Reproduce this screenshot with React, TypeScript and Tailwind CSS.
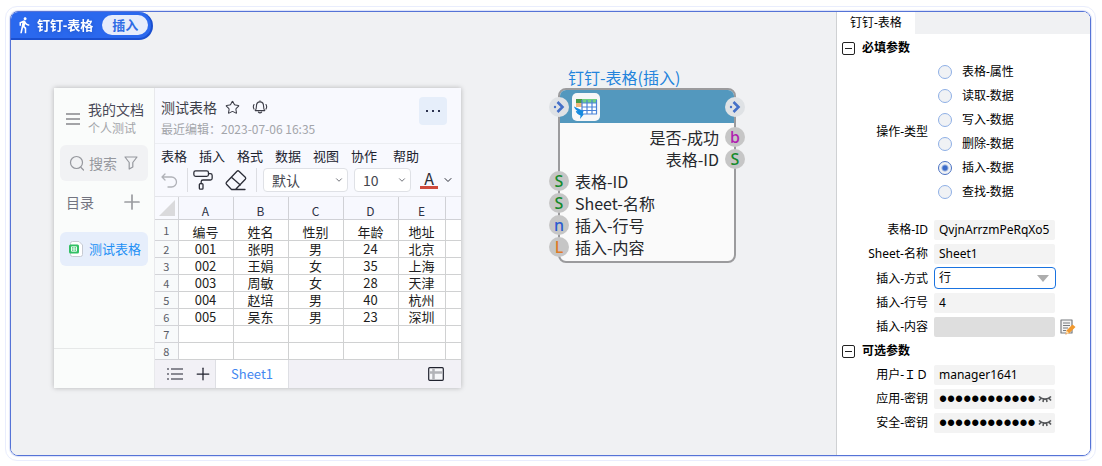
import type { ReactNode } from 'react';
import { ChevronDown, PaintRoller, Plus, Star } from 'lucide-react';
import { MdDirectionsWalk } from 'react-icons/md';

const operations = ['表格-属性', '读取-数据', '写入-数据', '删除-数据', '插入-数据', '查找-数据'];

const menus = ['表格', '插入', '格式', '数据', '视图', '协作'];

const columns = ['A', 'B', 'C', 'D', 'E', ''];

const rows = [
  ['编号', '姓名', '性别', '年龄', '地址'],
  ['001', '张明', '男', '24', '北京'],
  ['002', '王娟', '女', '35', '上海'],
  ['003', '周敏', '女', '28', '天津'],
  ['004', '赵培', '男', '40', '杭州'],
  ['005', '吴东', '男', '23', '深圳'],
  [],
  [],
];

const outputs = [
  { type: 'b', label: '是否-成功', color: 'text-[#b01fb0]' },
  { type: 'S', label: '表格-ID', color: 'text-[#158a2c]' },
];

const inputs = [
  { type: 'S', label: '表格-ID', color: 'text-[#158a2c]' },
  { type: 'S', label: 'Sheet-名称', color: 'text-[#158a2c]' },
  { type: 'n', label: '插入-行号', color: 'text-[#2a5bd0]' },
  { type: 'L', label: '插入-内容', color: 'text-[#df7a26]' },
];

function StepBadge() {
  return (
    <div className="absolute left-0 top-0 flex h-7 items-center rounded-r-full rounded-tl-md border-b-2 border-r-2 border-[#1a4fcf] bg-[#2a68ee] pl-1 pr-[3px] text-[13px] font-bold leading-none text-white">
      <MdDirectionsWalk className="h-[18px] w-[18px]" />
      <span className="ml-1 drop-shadow-sm">钉钉-表格</span>
      <span className="ml-[9px] flex h-5 items-center rounded-full bg-[#e6ecfb] px-[10px] text-[#2f6ce5]">插入</span>
    </div>
  );
}

function BellIcon() {
  return (
    <svg viewBox="0 0 16 16" className="h-4 w-4" fill="none" stroke="currentColor" strokeWidth="1.1" strokeLinecap="round" strokeLinejoin="round">
      <path d="M8 1.8v1M3.2 11.6c1-1 1.2-2.200 1.200-4.200C4.400 4.700 5.900 2.900 8 2.900s3.600 1.800 3.600 4.500c0 2 .2 3.200 1.200 4.200zM6.400 13.200c.8.900 2.400.900 3.200 0" />
      <path d="M2 5.500c-.8 1.400-.8 3.200 0 4.600M14 5.500c.8 1.400.8 3.200 0 4.600" />
    </svg>
  );
}

function EraserIcon() {
  return (
    <svg viewBox="0 0 24 22" className="h-[22px] w-6" fill="none" stroke="currentColor" strokeWidth="1.300" strokeLinejoin="round" strokeLinecap="round">
      <path d="M7.500 20.500 2.500 15.300a1.500 1.500 0 0 1 0-2L13 2.200a1.500 1.500 0 0 1 2 0l6.300 6a1.500 1.500 0 0 1 0 2L11.500 20.500zM7.500 8.200l8.800 7.800M7.500 20.500h13.500" />
    </svg>
  );
}

function DocSidebar() {
  return (
    <aside className="flex w-[101px] shrink-0 flex-col border-r border-[#e8e9ec] bg-[#fafcfb]">
      <div className="flex items-center gap-2 pl-3 pt-3">
        <svg viewBox="0 0 14 12" className="h-3 w-[14px] shrink-0" stroke="#86868c" strokeWidth="1.500">
          <path d="M0 1h14M0 6h14M0 11h14" />
        </svg>
        <div className="whitespace-nowrap">
          <p className="text-sm leading-[18px] text-[#4a4a58]">我的文档</p>
          <p className="text-xs leading-5 text-[#a3a5aa]">个人测试</p>
        </div>
      </div>
      <label className="mx-[6px] mt-[7px] flex h-9 items-center gap-1 rounded-md bg-[#f1f2f4] pl-[9px] pr-[10px]">
        <svg viewBox="0 0 16 16" className="h-4 w-4 shrink-0" fill="none" stroke="#96989e" strokeWidth="1.200" strokeLinecap="round">
          <circle cx="7.500" cy="7.500" r="6" />
          <path d="m12 12.500 2.500 2.500" />
        </svg>
        <input
          type="text"
          aria-label="搜索"
          placeholder="搜索"
          className="w-0 min-w-0 flex-1 bg-transparent text-sm leading-5 outline-none placeholder:text-[#96989e]"
        />
        <svg viewBox="0 0 14 14" className="h-[14px] w-[14px] shrink-0" fill="none" stroke="#96989e" strokeWidth="1.200" strokeLinejoin="round">
          <path d="M1 1h12L8.800 6.500V11L5.200 13V6.500z" />
        </svg>
      </label>
      <div className="mt-[10px] flex h-[22px] items-center justify-between px-3 text-sm leading-5 text-[#727480]">
        <span>目录</span>
        <button type="button" aria-label="新建" className="-mr-0.5 text-[#9a9ca0]">
          <Plus className="h-6 w-6" strokeWidth={1.7} />
        </button>
      </div>
      <a href="#sheet" className="mx-[6px] mt-[19px] flex h-[34px] items-center gap-[6px] whitespace-nowrap rounded-md bg-[#e6eefb] pl-[9px] text-[13px] text-[#1e90f5]">
        <svg viewBox="0 0 14 16" className="h-4 w-[14px] shrink-0">
          <path d="M3.500.500h6.500l3.500 3.500v9.500a2 2 0 0 1-2 2h-8a2 2 0 0 1-2-2v-11a2 2 0 0 1 2-2z" fill="#fff" stroke="#c6cad2" />
          <rect x="0" y="3.500" width="10" height="9" rx="1.500" fill="#33c065" />
          <path d="M2.500 5.800h5v4.400h-5zM2.500 8h5M5 5.800v4.400" fill="none" stroke="#fff" strokeWidth=".9" />
        </svg>
        测试表格
      </a>
      <div className="mt-auto h-10 border-t border-[#e6e8e8]" />
    </aside>
  );
}

function ToolbarSelect({ label, value, className }: { label: string; value: string; className: string }) {
  return (
    <span className={`relative ${className}`}>
      <select
        aria-label={label}
        className="block h-6 w-full appearance-none rounded border border-[#dfe1e6] bg-white pl-2 text-sm leading-5 text-[#44464e] outline-none"
      >
        <option>{value}</option>
      </select>
      <ChevronDown className="pointer-events-none absolute right-1 top-[7px] h-[10px] w-[10px] text-[#555860]" />
    </span>
  );
}

function Spreadsheet() {
  return (
    <table className="w-full table-fixed border-collapse text-center text-[13px]">
      <colgroup>
        <col className="w-[23px]" />
        <col className="w-[55px]" />
        <col className="w-[55px]" />
        <col className="w-[55px]" />
        <col className="w-[55px]" />
        <col className="w-[47px]" />
        <col />
      </colgroup>
      <thead>
        <tr className="h-[22px] bg-[#f7f8fe] text-xs leading-4 text-[#2d3245]">
          <td className="border-b border-r border-[#d3d4d8] bg-[#f9faff] p-0">
            <svg viewBox="0 0 16 16" className="ml-auto mr-[3px] h-4 w-4" fill="#dadadc">
              <path d="M16 0v16H0z" />
            </svg>
          </td>
          {columns.map((name, index) => (
            <th key={index} scope="col" className="border-b border-r border-[#d0d1d6] px-0 pb-0 pt-[6px] font-normal last:border-r-0">
              {name}
            </th>
          ))}
        </tr>
      </thead>
      <tbody className="bg-white">
        {rows.map((cells, row) => (
          <tr key={row} className="h-[17px] first:h-[21px]">
            <th scope="row" className="border-b border-r border-[#d3d4d8] bg-[#f8fafb] p-0 text-[11px] font-normal leading-4 text-[#5a5d66]">
              {row + 1}
            </th>
            {columns.map((_, index) => (
              <td key={index} className="border-b border-r border-[#d0d1d2] p-0 align-bottom leading-4 text-[#1d1d20] last:border-r-0">
                {cells[index]}
              </td>
            ))}
          </tr>
        ))}
      </tbody>
    </table>
  );
}

function DocWindow() {
  return (
    <section className="absolute left-[43px] top-[76px] flex w-[407px] bg-[#f8f9fe] font-['Noto_Sans_CJK_SC',sans-serif] shadow-[0_0_5px_rgba(0,0,0,0.25)]">
      <DocSidebar />
      <div className="min-w-0 flex-1">
        <header className="flex h-14 justify-between border-b border-[#eceef2] pl-[6px] pr-[14px] pt-[9px]">
          <div>
            <div className="flex items-center gap-2 text-[#3d3e48]">
              <h2 className="text-sm leading-5">测试表格</h2>
              <Star className="h-[15px] w-[15px]" strokeWidth={1.7} />
              <span className="ml-1">
                <BellIcon />
              </span>
            </div>
            <p className="mt-1 text-xs leading-4 text-[#a3a5aa]">最近编辑：2023-07-06 16:35</p>
          </div>
          <button type="button" aria-label="更多" className="flex h-7 w-7 items-center justify-center gap-1 rounded bg-[#e6eefa]">
            <span className="h-0.5 w-0.5 bg-[#2d3350]" />
            <span className="h-0.5 w-0.5 bg-[#2d3350]" />
            <span className="h-0.5 w-0.5 bg-[#2d3350]" />
          </button>
        </header>
        <nav className="flex h-6 items-center gap-3 whitespace-nowrap pl-[6px] text-[13px] leading-5 text-[#20222e]">
          {menus.map((name) => (
            <button key={name} type="button">
              {name}
            </button>
          ))}
          <button type="button" className="ml-1">
            帮助
          </button>
        </nav>
        <div className="flex h-[29px] items-center border-b border-[#e4e5ea] pb-1 pl-[6px] text-[#2c2e38]">
          <button type="button" aria-label="撤销" className="text-[#b0b2b8]">
            <svg viewBox="0 0 17 15" className="h-[15px] w-[17px]" fill="none" stroke="currentColor" strokeWidth="1.300" strokeLinecap="round" strokeLinejoin="round">
              <path d="M4 1 1 4l3 3M1 4h9.500a5 5 0 0 1 0 10H7" />
            </svg>
          </button>
          <span className="ml-[9px] h-full w-px bg-[#dcdde2]" />
          <button type="button" aria-label="格式刷" className="ml-1">
            <PaintRoller className="h-[22px] w-[22px]" strokeWidth={1.4} />
          </button>
          <button type="button" aria-label="清除" className="ml-[10px]">
            <EraserIcon />
          </button>
          <span className="ml-2 h-full w-px bg-[#dcdde2]" />
          <ToolbarSelect label="字体" value="默认" className="ml-[6px] w-[85px]" />
          <ToolbarSelect label="字号" value="10" className="ml-[6px] w-[57px]" />
          <button type="button" aria-label="字体颜色" className="ml-[9px] flex items-center gap-1">
            <span className="w-[18px] border-b-[3px] border-[#cf4a3c] text-base leading-[15px]">A</span>
            <ChevronDown className="h-3 w-3" />
          </button>
        </div>
        <Spreadsheet />
        <footer className="flex h-7 items-center bg-[#f2f1f6] text-[#20222e]">
          <button type="button" aria-label="工作表列表" className="ml-3">
            <svg viewBox="0 0 16 12" className="h-3 w-4" stroke="currentColor" strokeWidth="1.200">
              <path d="M0 1h2M4 1h12M0 6h2M4 6h12M0 11h2M4 11h12" />
            </svg>
          </button>
          <button type="button" aria-label="添加工作表" className="ml-[10px]">
            <Plus className="h-5 w-5" strokeWidth={1.5} />
          </button>
          <button type="button" className="ml-0.5 h-full border-x border-[#dedfe4] bg-white px-[15px] text-[13px] text-[#4387f0]">
            Sheet1
          </button>
          <button type="button" aria-label="视图" className="ml-auto mr-[17px]">
            <svg viewBox="0 0 16 14" className="h-[14px] w-4">
              <rect x=".7" y=".7" width="14.600" height="12.600" rx="1" fill="#f6f6f9" stroke="#20222e" strokeWidth="1.200" />
              <path d="M5.500 1.500v11M1.500 5.500h13" stroke="#b2b3b8" strokeWidth="2.500" />
            </svg>
          </button>
        </footer>
      </div>
    </section>
  );
}

function FlowPort() {
  return (
    <span className="z-10 flex h-5 w-5 shrink-0 items-center justify-center rounded-full bg-[#dfe2e5]">
      <svg viewBox="0 0 12 12" className="h-3 w-3" fill="none" stroke="#4570c8" strokeWidth="2.600">
        <path d="m4.500 1 5 5-5 5" />
        <circle cx="2" cy="6" r="1.200" fill="#4570c8" stroke="none" />
      </svg>
    </span>
  );
}

function Port({ type, color }: { type: string; color: string }) {
  return (
    <span className={`flex h-5 w-5 shrink-0 items-center justify-center rounded-full bg-[#c6c6c6] font-['Noto_Sans'] text-base font-medium leading-5 ${color}`}>
      {type}
    </span>
  );
}

function FlowNode() {
  return (
    <section className="absolute left-[547px] top-[54px] w-[178px] font-['Noto_Sans_CJK_SC',sans-serif] text-base leading-[22px] text-[#26282c]">
      <h2 className="whitespace-nowrap pl-[10px] text-[#2384dc]">钉钉-表格(插入)</h2>
      <div className="rounded-lg border-2 border-[#9b9b9d] bg-[#fafafa] pb-[3px]">
        <div className="-mx-[11px] flex items-center">
          <FlowPort />
          <div className="-mx-[9px] flex h-[33px] flex-1 items-center rounded-t-md bg-[#5398be] pl-3">
            <svg viewBox="0 0 28 28" className="h-7 w-7">
              <rect width="28" height="28" rx="5" fill="#f7f7f8" />
              <rect x="4" y="6" width="21" height="15" fill="#fff" />
              <rect x="4" y="6" width="6" height="4" fill="#4a9c48" />
              <rect x="10" y="6" width="15" height="4" fill="#70cf83" />
              <rect x="4" y="10" width="6" height="4" fill="#efb77b" />
              <path d="M10 10h15M10 14h15M10 17.500h15M10 21h15M10 7v14M15 7v14M20 7v14M24.500 7v14" stroke="#4b83d8" strokeWidth="1.200" />
              <path d="M2 13.500 11.500 18l-.8 3 1 .600L8 26l.5-3.500C5.500 21.500 4 19.500 3.800 18l2 .300C3.800 17 2.300 15.300 2 13.500z" fill="#168ae0" />
            </svg>
          </div>
          <FlowPort />
        </div>
        <ul className="mt-[3px]">
          {outputs.map((port) => (
            <li key={port.label} className="-mr-[11px] flex h-[22px] items-center justify-end gap-[6px]">
              {port.label}
              <Port type={port.type} color={port.color} />
            </li>
          ))}
        </ul>
        <ul>
          {inputs.map((port) => (
            <li key={port.label} className="-ml-[11px] flex h-[22px] items-center gap-[6px]">
              <Port type={port.type} color={port.color} />
              {port.label}
            </li>
          ))}
        </ul>
      </div>
    </section>
  );
}

function SectionHeading({ children }: { children: ReactNode }) {
  return (
    <button type="button" className="flex h-6 items-center gap-[7px] pl-[5px] font-bold">
      <span className="flex h-[13px] w-[13px] items-center justify-center rounded-xs border border-[#222]">
        <span className="h-px w-[7px] bg-[#222]" />
      </span>
      {children}
    </button>
  );
}

function FieldRow({ id, label, children }: { id: string; label: string; children: ReactNode }) {
  return (
    <div className="flex min-h-6 items-center gap-[6px]">
      <label htmlFor={id} className="w-[91px] shrink-0 text-right">
        {label}
      </label>
      {children}
    </div>
  );
}

const fieldClass = 'h-5 w-[121px] rounded-xs bg-[#f3f3f3] px-[5px] leading-5 outline-none';

function SecretField({ id }: { id: string }) {
  return (
    <span className="flex h-5 w-[121px] items-center rounded-xs bg-[#f3f3f3] pl-[5px] pr-[3px]">
      <input
        id={id}
        type="password"
        defaultValue="abcdefghijkl"
        className="h-5 w-0 min-w-0 flex-1 bg-transparent font-['Liberation_Sans'] text-[23px] leading-5 outline-none"
      />
      <button type="button" aria-label="显示" className="text-[#55575a]">
        <svg viewBox="0 0 14 8" className="h-2 w-[14px]" fill="none" stroke="currentColor" strokeWidth="1.600">
          <path d="M1 1.500c3.500 3.500 8.500 3.500 12 0M3 3.200 1 5.500M5.500 4.300 5 7M8.500 4.300 9 7M11 3.200l2 2.300" />
        </svg>
      </button>
    </span>
  );
}

function PropertyPanel() {
  return (
    <aside className="flex w-[254px] shrink-0 flex-col border-l border-[#cfd1d3] bg-white text-xs leading-5 text-black">
      <div className="flex h-[22px] bg-[#f0f1f3]">
        <button type="button" className="bg-white px-[13px]">
          钉钉-表格
        </button>
      </div>
      <div className="mt-0.5 flex flex-col">
        <SectionHeading>必填参数</SectionHeading>
        <div role="radiogroup" aria-labelledby="operation-type" className="mb-[14px] flex items-center">
          <span id="operation-type" className="w-[91px] text-right">
            操作-类型
          </span>
          <div className="ml-[10px]">
            {operations.map((name) => (
              <label key={name} className="flex h-6 items-center gap-[10px]">
                <input
                  type="radio"
                  name="operation"
                  defaultChecked={name === '插入-数据'}
                  className="h-[14px] w-[14px] appearance-none rounded-full border border-[#8fb0e6] bg-[#f0f2f5] checked:border-[#4a72c4] checked:bg-[radial-gradient(circle,#3b6bc8_2px,transparent_4px)]"
                />
                {name}
              </label>
            ))}
          </div>
        </div>
        <FieldRow id="table-id" label="表格-ID">
          <input id="table-id" type="text" defaultValue="QvjnArrzmPeRqXo5" className={fieldClass} />
        </FieldRow>
        <FieldRow id="sheet-name" label="Sheet-名称">
          <input id="sheet-name" type="text" defaultValue="Sheet1" className={fieldClass} />
        </FieldRow>
        <FieldRow id="insert-mode" label="插入-方式">
          <span className="relative w-[122px] pb-0.5 pt-px">
            <select id="insert-mode" className="block h-[22px] w-full appearance-none rounded border border-[#1a73e0] bg-white px-1 leading-5 outline-none">
              <option>行</option>
              <option>列</option>
            </select>
            <svg viewBox="0 0 12 7" className="pointer-events-none absolute right-[7px] top-[9px] h-[7px] w-3" fill="#adadad">
              <path d="M0 0h12L6 7z" />
            </svg>
          </span>
        </FieldRow>
        <FieldRow id="row-number" label="插入-行号">
          <input id="row-number" type="text" defaultValue="4" className={fieldClass} />
        </FieldRow>
        <FieldRow id="content" label="插入-内容">
          <input id="content" type="text" disabled className="h-5 w-[121px] rounded-xs bg-[#dedede] px-[5px]" />
          <button type="button" aria-label="编辑" className="-ml-px">
            <svg viewBox="0 0 16 16" className="h-4 w-4">
              <path d="M1 1h11v13H1z" fill="#f4f4f4" stroke="#777a7e" strokeWidth="1.200" strokeLinejoin="round" />
              <path d="M3 4h7M3 6.500h7M3 9h5M3 11.500h3" stroke="#777a7e" strokeWidth="1.100" />
              <path d="m6.500 11.500 6-6L15.500 8l-6.300 6.300-3.500 1z" fill="#f2992e" />
              <path d="m6.500 11.500 2.700 2.800-3.500 1z" fill="#ffe0b0" />
              <path d="m6 14.200 1 .9-1.500.5z" fill="#d0651a" />
            </svg>
          </button>
        </FieldRow>
        <SectionHeading>可选参数</SectionHeading>
        <FieldRow id="user-id" label="用户-ＩＤ">
          <input id="user-id" type="text" defaultValue="manager1641" className={fieldClass} />
        </FieldRow>
        <FieldRow id="app-key" label="应用-密钥">
          <SecretField id="app-key" />
        </FieldRow>
        <FieldRow id="secret-key" label="安全-密钥">
          <SecretField id="secret-key" />
        </FieldRow>
      </div>
    </aside>
  );
}

export default function App() {
  return (
    <div className="flex min-h-screen bg-white pb-[5px] pl-[5px] pr-[6px] pt-[6px] font-['Noto_Sans','Noto_Sans_CJK_SC',sans-serif]">
      <div className="flex flex-1 rounded-xl border border-[#e9edfd] p-1">
        <div className="flex flex-1 overflow-hidden rounded-lg border border-[#5573d6] shadow-[0_0_1px_1px_#dbe2fa]">
          <main className="relative min-w-0 flex-1 overflow-hidden bg-[#f0f1f3]">
            <StepBadge />
            <DocWindow />
            <FlowNode />
          </main>
          <PropertyPanel />
        </div>
      </div>
    </div>
  );
}
